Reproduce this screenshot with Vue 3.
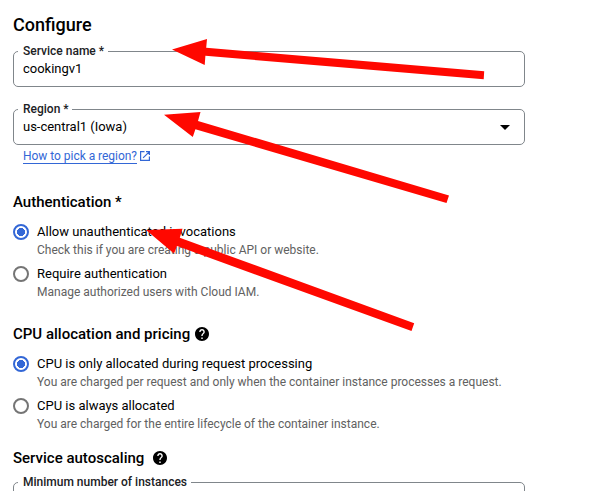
<script setup>
const groups = [
  {
    id: 'auth',
    title: 'Authentication *',
    options: [
      { label: 'Allow unauthenticated invocations', hint: 'Check this if you are creating a public API or website.', on: true },
      { label: 'Require authentication', hint: 'Manage authorized users with Cloud IAM.', on: false },
    ],
  },
  {
    id: 'cpu',
    title: 'CPU allocation and pricing',
    help: true,
    options: [
      { label: 'CPU is only allocated during request processing', hint: 'You are charged per request and only when the container instance processes a request.', on: true },
      { label: 'CPU is always allocated', hint: 'You are charged for the entire lifecycle of the container instance.', on: false },
    ],
  },
  { id: 'scaling', title: 'Service autoscaling', help: true, options: [] },
]
const helpPath = 'M12 2C6.48 2 2 6.48 2 12s4.48 10 10 10 10-4.48 10-10S17.52 2 12 2zm1 17h-2v-2h2v2zm2.07-7.75l-.9.92C13.45 12.9 13 13.5 13 15h-2v-.5c0-1.1.45-2.1 1.17-2.83l1.24-1.26c.37-.36.59-.86.59-1.41 0-1.1-.9-2-2-2s-2 .9-2 2H8c0-2.21 1.79-4 4-4s4 1.79 4 4c0 .88-.36 1.68-.93 2.25z'
const arrows = [
  '172,49.5 207,39 206.2,47.7 484.2,71.3 483.7,79.3 205.4,55.8 204.7,65',
  '164,114.8 200.5,112 198,121 449,195.5 446.5,203 195.4,129.2 192.8,137',
  '146,230 182.5,228.8 179.8,237.8 414.2,323.3 411.5,331 177,246 174,253.5',
]
</script>

<template>
  <main class="page">
    <h1 class="title">Configure</h1>
    <fieldset class="field">
      <legend class="l-service">Service name *</legend>
      <div class="value"><span>cookingv1</span></div>
    </fieldset>
    <fieldset class="field region">
      <legend class="l-region">Region *</legend>
      <div class="value">
        <span>us-central1 (Iowa)</span>
        <svg class="caret" width="10" height="5" viewBox="0 0 10 5"><path d="M0 0h10L5 5z" /></svg>
      </div>
    </fieldset>
    <div class="link-row">
      <a class="link">How to pick a region?</a>
      <svg class="ext" width="10" height="10" viewBox="0 0 10 10">
        <path d="M4.5 .6H.6v8.8h8.8V5.5M6 .6h3.4V4M9.2.8L3.1 6.9" />
      </svg>
    </div>

    <section v-for="g in groups" :key="g.id" :class="['group', g.id]">
      <h2 class="heading">
        <span>{{ g.title }}</span>
        <svg v-if="g.help" class="help" width="14" height="14" viewBox="2 2 20 20"><path :d="helpPath" /></svg>
      </h2>
      <div v-for="o in g.options" :key="o.label" class="option">
        <span :class="['radio', { on: o.on }]"></span>
        <div class="copy">
          <div class="label">{{ o.label }}</div>
          <div class="hint">{{ o.hint }}</div>
        </div>
      </div>
    </section>

    <fieldset class="field minimum">
      <legend class="l-min">Minimum number of instances</legend>
      <div class="value"></div>
    </fieldset>

    <svg class="arrows" width="593" height="491" viewBox="0 0 593 491">
      <polygon v-for="a in arrows" :key="a" :points="a" />
    </svg>
  </main>
</template>

<style>
body { margin: 0; background: #fff; }
</style>

<style scoped>
.page {
  position: relative;
  box-sizing: border-box;
  width: 593px;
  height: 491px;
  padding: 13px 68px 0 13px;
  overflow: hidden;
  font-family: Roboto, sans-serif;
  color: #000;
}
.title { margin: 0; font-size: 18px; font-weight: 500; line-height: 24px; height: 32px; }
.field {
  box-sizing: border-box;
  width: 512px;
  height: 42px;
  min-width: 0;
  margin: 0;
  padding: 0 14px 0 4px;
  border: 1px solid #80868b;
  border-radius: 5px;
}
.region { margin-top: 16px; }
.field legend {
  box-sizing: border-box;
  height: 13px;
  padding: 0 0 0 5px;
  font-size: 12px;
  font-weight: 500;
  line-height: 12px;
  color: #202124;
  white-space: nowrap;
}
.l-service { width: 90px; }
.l-region { width: 54px; }
.l-min { width: 173px; }
.value {
  display: flex;
  align-items: center;
  justify-content: space-between;
  height: 22px;
  padding-left: 5px;
  font-size: 13px;
  line-height: 20px;
}
.value span { height: 20px; letter-spacing: -.02px; }
.caret { fill: #000; }
.link-row { display: flex; align-items: flex-start; gap: 3px; height: 45px; padding: 4px 0 0 10px; }
.link { height: 14px; border-bottom: 1px solid #3367d6; color: #3367d6; font-size: 12px; line-height: 14px; letter-spacing: -.03px; }
.ext { margin-top: 2px; fill: none; stroke: #3367d6; stroke-width: 1.2; }
.heading {
  display: flex;
  align-items: center;
  gap: 5px;
  height: 16px;
  margin: 0 0 13px;
  font-size: 15px;
  font-weight: 500;
}
.scaling .heading { gap: 9px; margin: 0; }
.option { display: flex; gap: 8px; height: 42px; }
.radio {
  box-sizing: border-box;
  width: 16px;
  height: 16px;
  margin-top: 1px;
  border: 2px solid #757575;
  border-radius: 50%;
}
.radio.on { border-color: #3367d6; background: radial-gradient(circle, #3367d6 3.8px, transparent 4.3px); }
.label { height: 18px; font-size: 13px; line-height: 18px; }
.hint { height: 18px; font-size: 12px; line-height: 18px; color: #616161; white-space: nowrap; }
.auth { height: 132px; }
.cpu { height: 124px; }
.scaling { height: 26px; }
.arrows { position: absolute; top: 0; left: 0; fill: #ff0800; }
</style>
